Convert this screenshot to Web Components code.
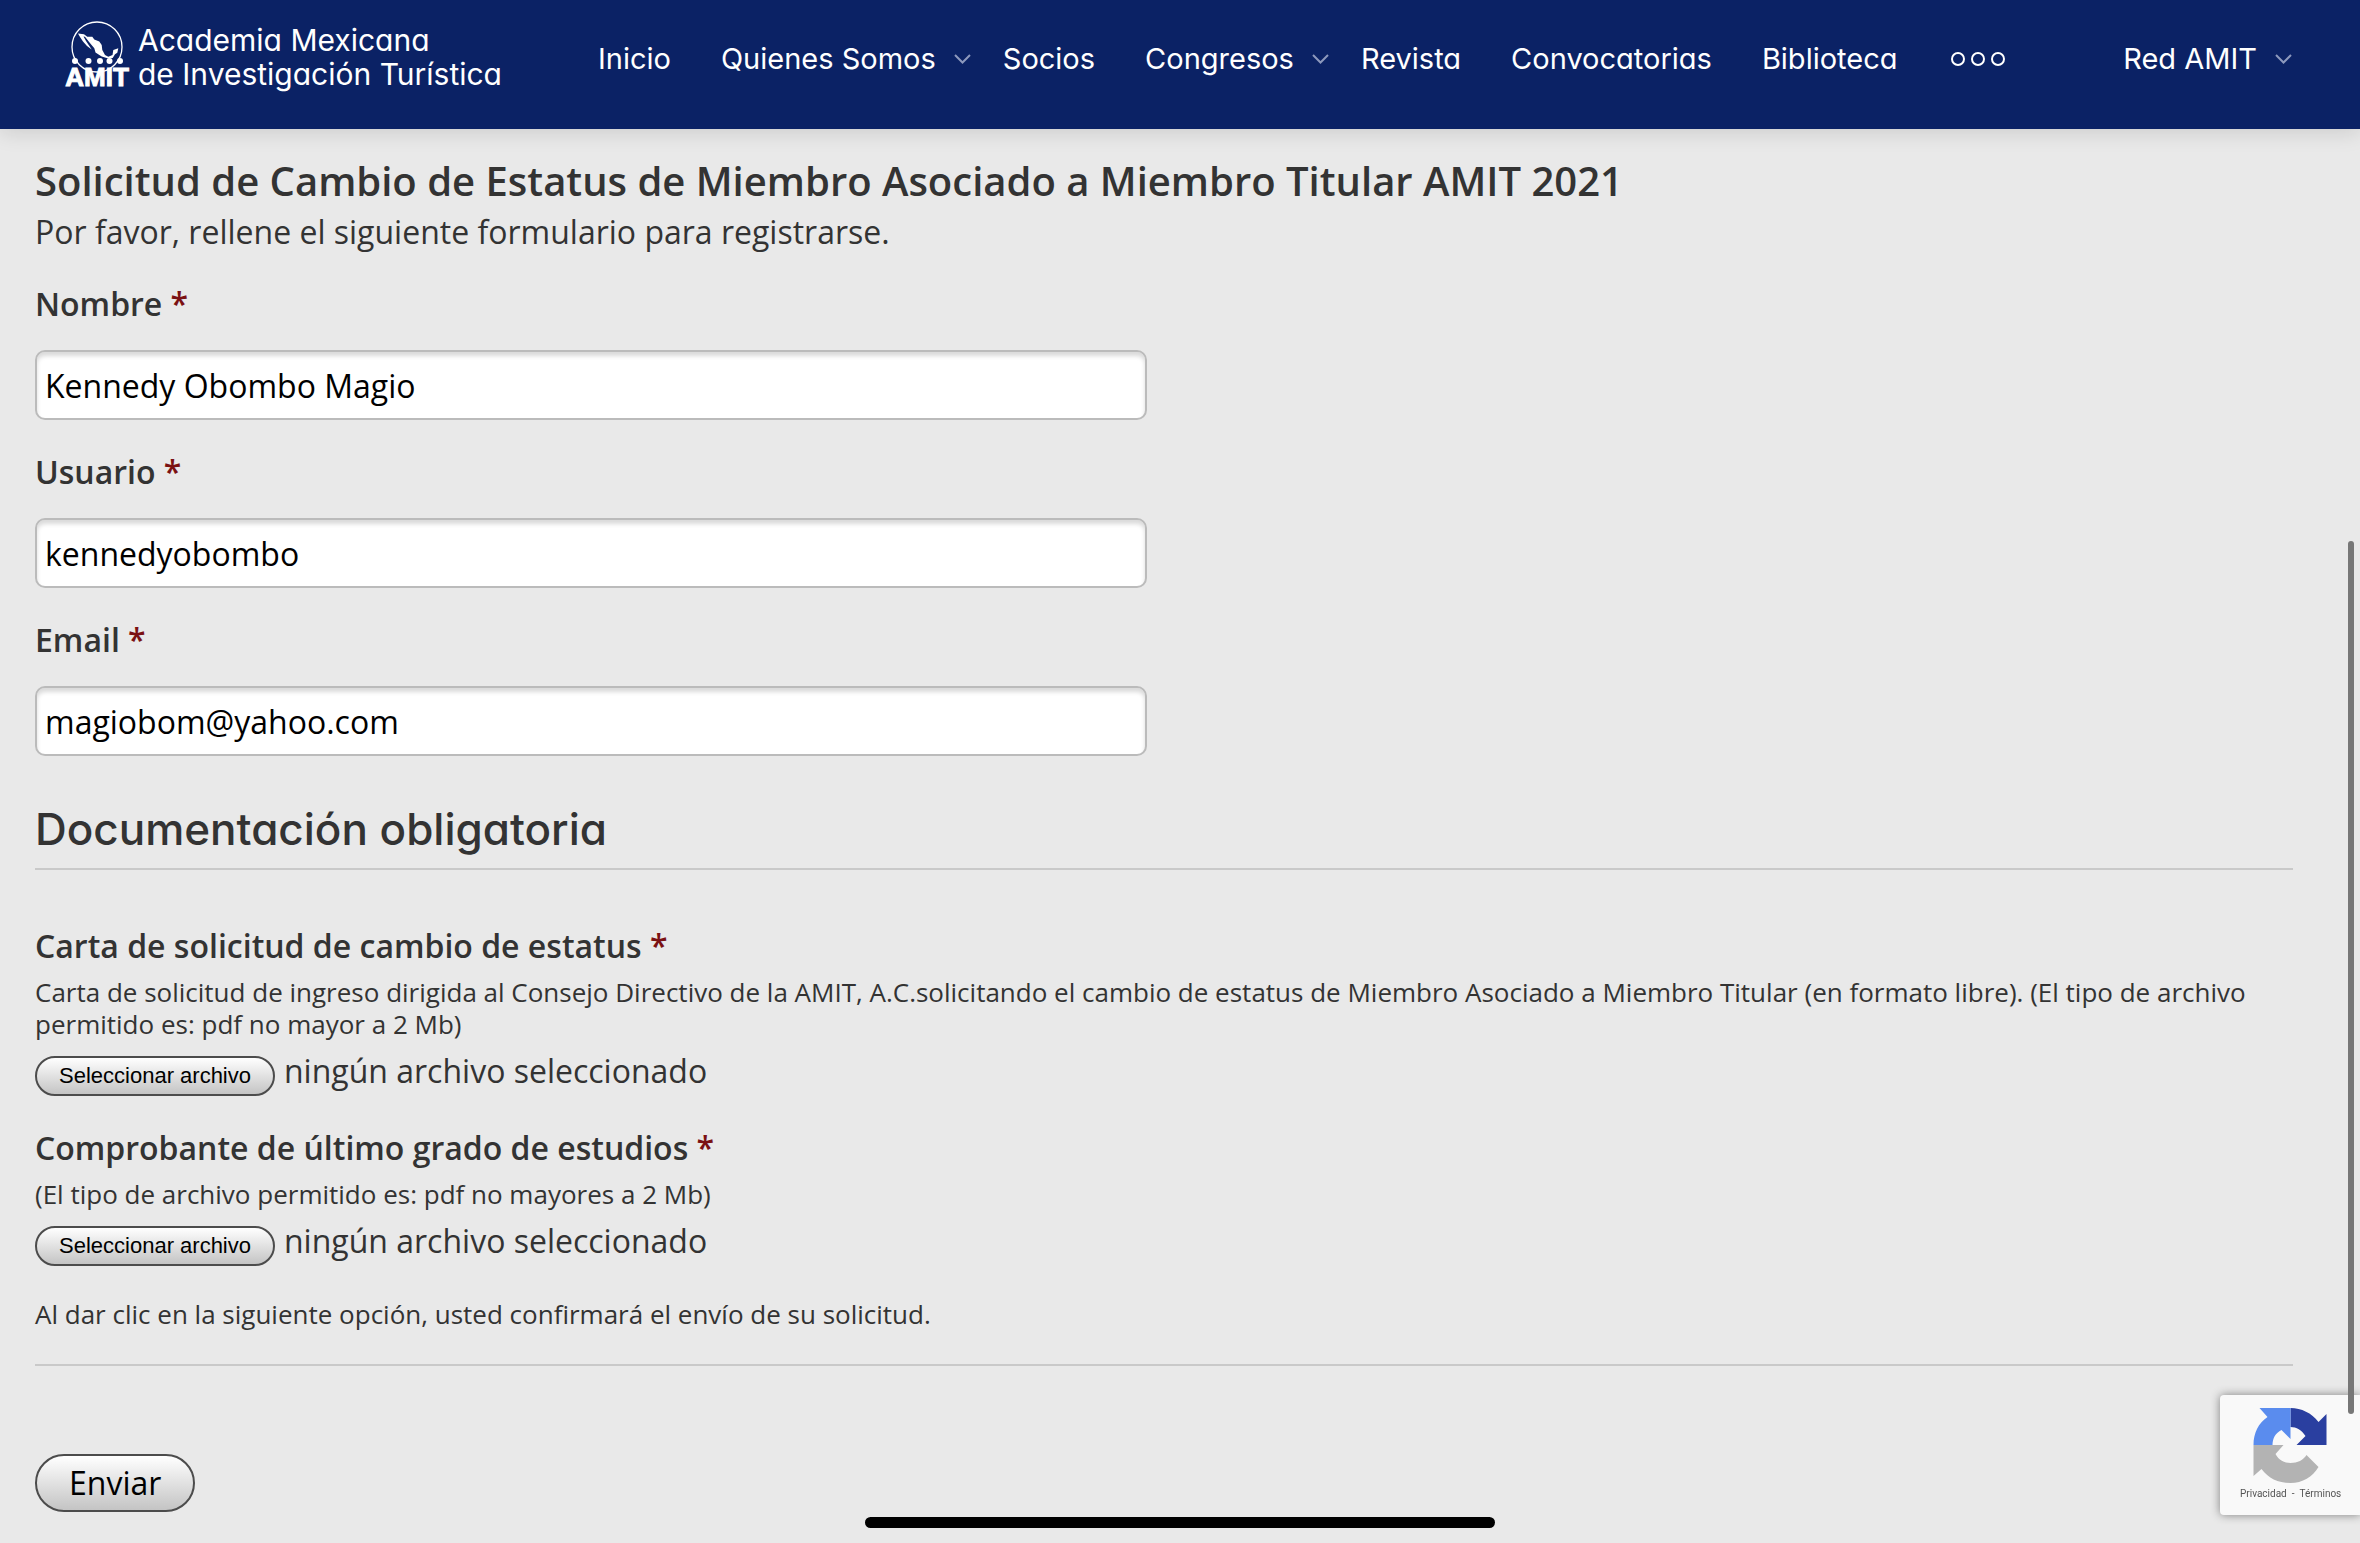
<!DOCTYPE html>
<html lang="es">
<head>
<meta charset="utf-8">
<title>AMIT</title>
<style>
  body {
    margin: 0;
    background: #e9e9e9;
    color: #333;
    font-family: "Open Sans", "Noto Sans", sans-serif;
    font-size: 32px;
    line-height: 48px;
    --display: Inter, "Open Sans", sans-serif;
  }
</style>
</head>
<body>
<amit-header>
  <amit-logo slot="logo"></amit-logo>
  <nav-item>Inicio</nav-item>
  <nav-item menu>Quienes Somos</nav-item>
  <nav-item>Socios</nav-item>
  <nav-item menu>Congresos</nav-item>
  <nav-item>Revista</nav-item>
  <nav-item>Convocatorias</nav-item>
  <nav-item>Biblioteca</nav-item>
  <nav-item slot="account" menu>Red AMIT</nav-item>
</amit-header>

<request-form></request-form>

<recaptcha-badge></recaptcha-badge>
<scroll-thumb></scroll-thumb>
<home-indicator></home-indicator>

<script>
class AmitLogo extends HTMLElement {
  constructor() {
    super();
    this.attachShadow({ mode: 'open' }).innerHTML = `
      <style>
        :host { display: block; }
        a {
          display: flex;
          gap: 10px;
          color: #fff;
          text-decoration: none;
          font: 30px/34px var(--display);
          font-feature-settings: "cv11";
        }
        svg { width: 62px; height: 68px; flex: none; overflow: visible; }
        div { padding-top: 3px; }
        span { display: block; white-space: nowrap; }
      </style>
      <a href="#">
        <svg viewBox="0 0 62 68" fill="#fff" aria-hidden="true">
          <circle cx="31" cy="27" r="25" fill="none" stroke="#fff" stroke-width="1.3"/>
          <path d="M12 13.500L18 14.300 21.300 16.700 26.300 16.700 28.300 19.500 33.300 21.500 35.700 25 36.300 30 39 35 42.300 36.700 46.500 35 47.300 30 52.300 28.300 51.300 32.800 49 34.300 46.700 38 42.300 38.500 35.700 36.500 29.500 32.500 28.300 28.300 23.300 22.300 19 16.700 17.500 16.500 20 21 25.700 29.500 21 26 17 21.500 14 17Z"/>
          <circle cx="9" cy="41" r="3"/><circle cx="22.500" cy="41" r="3"/><circle cx="34" cy="41" r="3"/><circle cx="43.500" cy="41" r="3"/><circle cx="54" cy="41" r="3"/>
          <text x="31" y="66" text-anchor="middle" font-family="Liberation Sans Narrow, Liberation Sans" font-size="26" font-weight="700" stroke="#fff" stroke-width="1">AMIT</text>
        </svg>
        <div><span>Academia Mexicana</span><span>de Investigación Turística</span></div>
      </a>
    `;
  }
}
customElements.define('amit-logo', AmitLogo);

class NavItem extends HTMLElement {
  constructor() {
    super();
    this.attachShadow({ mode: 'open' }).innerHTML = `
      <style>
        :host { display: block; padding-right: 50px; }
        :host([menu]) { padding-right: 32px; }
        :host([slot="account"]) { padding-right: 0; }
        a {
          display: flex;
          align-items: center;
          gap: 18px;
          color: #fff;
          text-decoration: none;
          white-space: nowrap;
        }
        svg { display: none; width: 17px; height: 10px; }
        :host([menu]) svg { display: block; }
      </style>
      <a href="#">
        <slot></slot>
        <svg viewBox="0 0 17 10" fill="none" stroke="#8d99bd" stroke-width="2" aria-hidden="true"><path d="M1 1l7.500 7.500L16 1"/></svg>
      </a>
    `;
  }
}
customElements.define('nav-item', NavItem);

class AmitHeader extends HTMLElement {
  constructor() {
    super();
    this.attachShadow({ mode: 'open' }).innerHTML = `
      <style>
        :host { display: block; }
        header {
          display: flex;
          align-items: flex-start;
          box-sizing: border-box;
          min-height: 129px;
          padding: 20px 68px 0 66px;
          background: #0b2265;
          box-shadow: 0 4px 20px rgba(0, 0, 0, 0.12);
        }
        nav {
          display: flex;
          flex: 1;
          align-items: center;
          margin-left: 96px;
          padding-top: 18px;
          font: 29px/42px var(--display);
          font-feature-settings: "cv11";
        }
        button {
          display: flex;
          gap: 6px;
          margin: 0 auto 0 3px;
          padding: 0;
          border: 0;
          background: none;
        }
        i {
          box-sizing: border-box;
          width: 14px;
          height: 14px;
          border: 2px solid #fff;
          border-radius: 50%;
        }
      </style>
      <header>
        <slot name="logo"></slot>
        <nav>
          <slot></slot>
          <button type="button" aria-label="Más"><i></i><i></i><i></i></button>
          <slot name="account"></slot>
        </nav>
      </header>
    `;
  }
}
customElements.define('amit-header', AmitHeader);

class TextField extends HTMLElement {
  constructor() {
    super();
    this.attachShadow({ mode: 'open' }).innerHTML = `
      <style>
        :host { display: block; margin-bottom: 28px; }
        label { display: block; margin-bottom: 22px; font-weight: 600; }
        label span { color: #7b1113; }
        input {
          display: block;
          box-sizing: border-box;
          width: 49.25%;
          height: 70px;
          padding: 0 8px;
          border: 2px solid #bbb;
          border-radius: 10px;
          background: #fff;
          box-shadow: inset 0 4px 4px rgba(0, 0, 0, 0.15);
          color: #000;
          font: inherit;
        }
      </style>
      <label for="field"><slot></slot> <span>*</span></label>
      <input id="field" required>
    `;
  }

  connectedCallback() {
    const input = this.shadowRoot.querySelector('input');
    input.type = this.getAttribute('type') || 'text';
    input.value = this.getAttribute('value') || '';
  }
}
customElements.define('text-field', TextField);

class FileField extends HTMLElement {
  constructor() {
    super();
    this.attachShadow({ mode: 'open' }).innerHTML = `
      <style>
        :host { display: block; margin-bottom: 28px; }
        label { display: block; font-weight: 600; }
        label span { color: #7b1113; }
        p { margin: 6px 0 7px; font-size: 26px; line-height: 32px; }
        .picker { display: flex; align-items: baseline; gap: 9px; }
        button {
          height: 40px;
          padding: 0 22px;
          border: 2px solid #4c4c4c;
          border-radius: 20px;
          background: linear-gradient(#fff, #c4c4c4);
          color: #000;
          font: 22px "Liberation Sans", Arial, sans-serif;
        }
      </style>
      <label for="file"><slot></slot> <span>*</span></label>
      <p><slot name="help"></slot></p>
      <div class="picker">
        <input id="file" type="file" accept="application/pdf" hidden>
        <button type="button">Seleccionar archivo</button>
        <output for="file">ningún archivo seleccionado</output>
      </div>
    `;
    const input = this.shadowRoot.querySelector('input');
    this.shadowRoot.querySelector('button').addEventListener('click', () => input.click());
    input.addEventListener('change', () => {
      const file = input.files[0];
      this.shadowRoot.querySelector('output').textContent = file ? file.name : 'ningún archivo seleccionado';
    });
  }
}
customElements.define('file-field', FileField);

class RequestForm extends HTMLElement {
  constructor() {
    super();
    this.attachShadow({ mode: 'open' }).innerHTML = `
      <style>
        :host { display: block; padding: 28px 67px 31px 35px; }
        h1 { margin: 0; font-size: 40px; line-height: 48px; font-weight: 600; }
        .intro { margin: 3px 0 24px; }
        h2 {
          margin: 46px 0 52px;
          padding-bottom: 12px;
          border-bottom: 2px solid #c9c9c9;
          font: 500 44px/54px var(--display);
          font-feature-settings: "cv11";
        }
        .note {
          margin: 32px 0 88px;
          padding-bottom: 34px;
          border-bottom: 2px solid #c9c9c9;
          font-size: 26px;
          line-height: 32px;
        }
        button {
          display: block;
          height: 58px;
          padding: 0 32px;
          border: 2px solid #4c4c4c;
          border-radius: 29px;
          background: linear-gradient(#fff, #c4c4c4);
          color: #000;
          font: inherit;
        }
      </style>
      <form>
        <h1>Solicitud de Cambio de Estatus de Miembro Asociado a Miembro Titular AMIT 2021</h1>
        <p class="intro">Por favor, rellene el siguiente formulario para registrarse.</p>
        <text-field value="Kennedy Obombo Magio">Nombre</text-field>
        <text-field value="kennedyobombo">Usuario</text-field>
        <text-field value="magiobom@yahoo.com" type="email">Email</text-field>
        <h2>Documentación obligatoria</h2>
        <file-field>Carta de solicitud de cambio de estatus<span slot="help">Carta de solicitud de ingreso dirigida al Consejo Directivo de la AMIT, A.C.solicitando el cambio de estatus de Miembro Asociado a Miembro Titular (en formato libre). (El tipo de archivo permitido es: pdf no mayor a 2 Mb)</span></file-field>
        <file-field>Comprobante de último grado de estudios<span slot="help">(El tipo de archivo permitido es: pdf no mayores a 2 Mb)</span></file-field>
        <p class="note">Al dar clic en la siguiente opción, usted confirmará el envío de su solicitud.</p>
        <button type="submit">Enviar</button>
      </form>
    `;
  }
}
customElements.define('request-form', RequestForm);

class RecaptchaBadge extends HTMLElement {
  constructor() {
    super();
    this.attachShadow({ mode: 'open' }).innerHTML = `
      <style>
        :host {
          position: fixed;
          right: 0;
          bottom: 28px;
          box-sizing: border-box;
          width: 140px;
          height: 120px;
          padding: 13px 20px 0;
          border-radius: 4px 0 0 4px;
          background: #f9f9f9;
          box-shadow: 0 0 10px gray;
        }
        svg { display: block; width: 75px; height: 75px; margin-left: 13px; }
        p { margin: 4px 0 0; font: 10px/14px Roboto, sans-serif; color: #555; white-space: nowrap; }
        a { color: inherit; text-decoration: none; }
        span { padding: 0 5px; }
      </style>
      <svg viewBox="0 0 74 75" aria-hidden="true">
        <path fill="#2a3fa0" d="M37 0C48 0 58 5 65 14L73 6V37H43L52 28C48 22 43 19 37 19Z"/>
        <path fill="#5a8cee" d="M0 37C0 25 5 15 14 9L6 0H37V31L28 22C22 25 19 30 19 37Z"/>
        <path fill="#b3b3b3" d="M0 37H30L22 46C25 52 31 55 37 55C44 55 50 52 53 47L65 59C59 69 49 75 37 75C24 75 15 70 8 61L0 68Z"/>
      </svg>
      <p><a href="#">Privacidad</a><span>-</span><a href="#">Términos</a></p>
    `;
  }
}
customElements.define('recaptcha-badge', RecaptchaBadge);

class ScrollThumb extends HTMLElement {
  constructor() {
    super();
    this.attachShadow({ mode: 'open' }).innerHTML = `
      <style>
        :host {
          position: fixed;
          top: 541px;
          right: 6px;
          bottom: 129px;
          width: 6px;
          border-radius: 3px;
          background: #777;
        }
      </style>
    `;
  }
}
customElements.define('scroll-thumb', ScrollThumb);

class HomeIndicator extends HTMLElement {
  constructor() {
    super();
    this.attachShadow({ mode: 'open' }).innerHTML = `
      <style>
        :host {
          position: fixed;
          right: 0;
          bottom: 15px;
          left: 0;
          width: 630px;
          height: 11px;
          margin: 0 auto;
          border-radius: 6px;
          background: #000;
        }
      </style>
    `;
  }
}
customElements.define('home-indicator', HomeIndicator);
</script>
</body>
</html>
